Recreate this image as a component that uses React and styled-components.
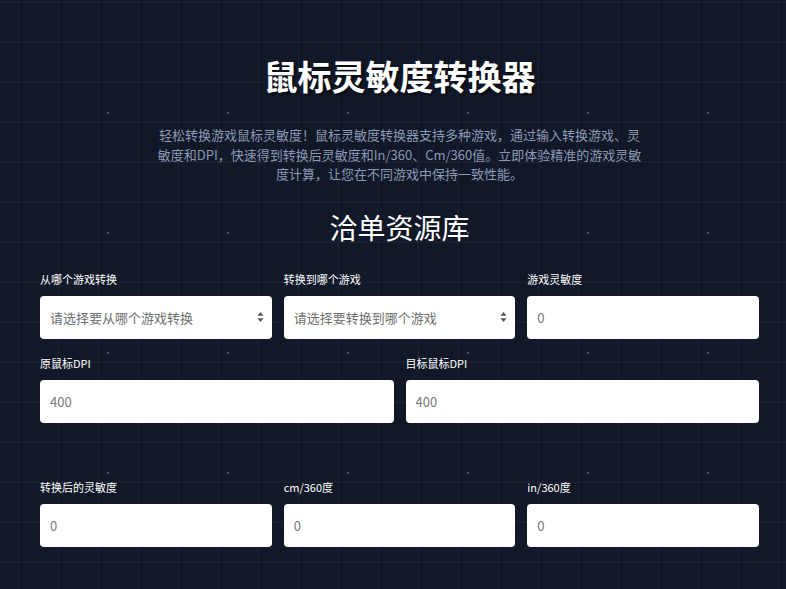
import React from "react";
import styled, { createGlobalStyle } from "styled-components";

const GlobalStyle = createGlobalStyle`
  html, body { margin: 0; padding: 0; }
  body {
    background-color: #111828;
    background-image:
      radial-gradient(circle, rgba(148,163,184,0.4) 1px, transparent 1.6px),
      linear-gradient(rgba(255,255,255,0.028) 2px, transparent 2px),
      linear-gradient(90deg, rgba(255,255,255,0.028) 2px, transparent 2px);
    background-size: 120px 120px, 40px 40px, 40px 40px;
    background-position: 48px 53px, 17px 1px, 17px 1px;
    font-family: "Noto Sans CJK SC", "Noto Sans", sans-serif;
    min-height: 589px;
  }
  * { box-sizing: border-box; }
`;

const Page = styled.div`
  padding: 55px 27px 40px 40px;
  display: flex;
  flex-direction: column;
  align-items: center;
`;

const Title = styled.h1`
  margin: 0;
  font-size: 34px;
  line-height: 41px;
  font-weight: 700;
  color: #ffffff;
  text-shadow: 2px 2px 3px rgba(0, 0, 0, 0.6);
`;

const Intro = styled.p`
  margin: 29px 0 0;
  max-width: 484px;
  font-size: 13px;
  line-height: 19.5px;
  color: #8a98b4;
  text-align: center;
`;

const SubTitle = styled.h2`
  margin: 26px 0 0;
  font-size: 28px;
  line-height: 34px;
  font-weight: 400;
  color: #ffffff;
`;

const Form = styled.div`
  width: 719px;
  margin-top: 27px;
  display: flex;
  flex-direction: column;
`;

const Row = styled.div`
  display: grid;
  grid-template-columns: repeat(${(p) => p.$cols}, 1fr);
  column-gap: 12px;
  margin-top: ${(p) => p.$top || 0}px;
`;

const Field = styled.label`
  display: flex;
  flex-direction: column;
`;

const Label = styled.span`
  font-size: 11px;
  line-height: 16px;
  font-weight: 400;
  color: #ffffff;
  margin-bottom: 9px;
`;

const controlCss = `
  width: 100%;
  height: 43px;
  border: none;
  border-radius: 4px;
  background: #ffffff;
  padding: 0 10px;
  font-size: 13px;
  font-family: "Noto Sans CJK SC", "Noto Sans", sans-serif;
  color: #333;
  outline: none;
`;

const Input = styled.input`
  ${controlCss}
  &::placeholder { color: #777777; }
`;

const SelectWrap = styled.div`
  position: relative;
`;

const Select = styled.select`
  ${controlCss}
  appearance: none;
  -webkit-appearance: none;
  color: #6f6f6f;
`;

const Arrows = styled.svg`
  position: absolute;
  right: 8px;
  top: 50%;
  transform: translateY(-50%);
  pointer-events: none;
`;

function SelectField({ label, placeholder }) {
  return (
    <Field>
      <Label>{label}</Label>
      <SelectWrap>
        <Select defaultValue="">
          <option value="" disabled>
            {placeholder}
          </option>
        </Select>
        <Arrows width="7" height="11" viewBox="0 0 7 11">
          <path d="M3.5 0.5 L6.5 4.3 L0.5 4.3 Z" fill="#555" />
          <path d="M3.5 10.5 L6.5 6.7 L0.5 6.7 Z" fill="#555" />
        </Arrows>
      </SelectWrap>
    </Field>
  );
}

function InputField({ label, placeholder }) {
  return (
    <Field>
      <Label>{label}</Label>
      <Input placeholder={placeholder} />
    </Field>
  );
}

export default function App() {
  return (
    <>
      <GlobalStyle />
      <Page>
        <Title>鼠标灵敏度转换器</Title>
        <Intro>
          轻松转换游戏鼠标灵敏度！鼠标灵敏度转换器支持多种游戏，通过输入转换游戏、灵敏度和DPI，快速得到转换后灵敏度和In/360、Cm/360值。立即体验精准的游戏灵敏度计算，让您在不同游戏中保持一致性能。
        </Intro>
        <SubTitle>洽单资源库</SubTitle>
        <Form>
          <Row $cols={3}>
            <SelectField label="从哪个游戏转换" placeholder="请选择要从哪个游戏转换" />
            <SelectField label="转换到哪个游戏" placeholder="请选择要转换到哪个游戏" />
            <InputField label="游戏灵敏度" placeholder="0" />
          </Row>
          <Row $cols={2} $top={16}>
            <InputField label="原鼠标DPI" placeholder="400" />
            <InputField label="目标鼠标DPI" placeholder="400" />
          </Row>
          <Row $cols={3} $top={56}>
            <InputField label="转换后的灵敏度" placeholder="0" />
            <InputField label="cm/360度" placeholder="0" />
            <InputField label="in/360度" placeholder="0" />
          </Row>
        </Form>
      </Page>
    </>
  );
}
